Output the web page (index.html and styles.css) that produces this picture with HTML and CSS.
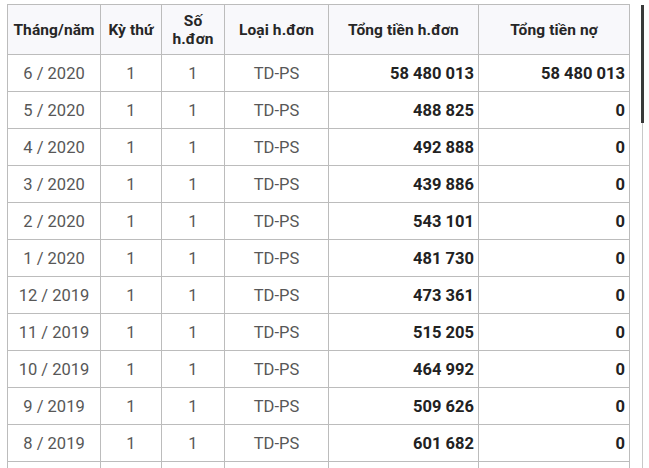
FILE: index.html
```html
<!DOCTYPE html>
<html>
<head>
<meta charset="utf-8">
<link rel="stylesheet" href="styles.css">
</head>
<body>
<div class="page">
  <table class="bills">
    <colgroup>
      <col class="c1"><col class="c2"><col class="c3"><col class="c4"><col class="c5"><col class="c6">
    </colgroup>
    <thead>
      <tr>
        <th>Tháng/năm</th>
        <th>Kỳ thứ</th>
        <th>Số<br>h.đơn</th>
        <th>Loại h.đơn</th>
        <th>Tổng tiền h.đơn</th>
        <th>Tổng tiền nợ</th>
      </tr>
    </thead>
    <tbody>
      <tr><td>6 / 2020</td><td>1</td><td>1</td><td>TD-PS</td><td class="num">58 480 013</td><td class="num">58 480 013</td></tr>
      <tr><td>5 / 2020</td><td>1</td><td>1</td><td>TD-PS</td><td class="num">488 825</td><td class="num">0</td></tr>
      <tr><td>4 / 2020</td><td>1</td><td>1</td><td>TD-PS</td><td class="num">492 888</td><td class="num">0</td></tr>
      <tr><td>3 / 2020</td><td>1</td><td>1</td><td>TD-PS</td><td class="num">439 886</td><td class="num">0</td></tr>
      <tr><td>2 / 2020</td><td>1</td><td>1</td><td>TD-PS</td><td class="num">543 101</td><td class="num">0</td></tr>
      <tr><td>1 / 2020</td><td>1</td><td>1</td><td>TD-PS</td><td class="num">481 730</td><td class="num">0</td></tr>
      <tr><td>12 / 2019</td><td>1</td><td>1</td><td>TD-PS</td><td class="num">473 361</td><td class="num">0</td></tr>
      <tr><td>11 / 2019</td><td>1</td><td>1</td><td>TD-PS</td><td class="num">515 205</td><td class="num">0</td></tr>
      <tr><td>10 / 2019</td><td>1</td><td>1</td><td>TD-PS</td><td class="num">464 992</td><td class="num">0</td></tr>
      <tr><td>9 / 2019</td><td>1</td><td>1</td><td>TD-PS</td><td class="num">509 626</td><td class="num">0</td></tr>
      <tr><td>8 / 2019</td><td>1</td><td>1</td><td>TD-PS</td><td class="num">601 682</td><td class="num">0</td></tr>
      <tr class="peek"><td></td><td></td><td></td><td></td><td></td><td></td></tr>
    </tbody>
  </table>
  <div class="track"><div class="thumb"></div></div>
</div>
</body>
</html>
```

FILE: styles.css
```css
html, body {
  margin: 0;
  padding: 0;
  background: #ffffff;
  overflow: hidden;
}
body {
  font-family: Roboto, "Noto Sans", Arial, sans-serif;
}
.page {
  display: flex;
  align-items: flex-start;
  padding: 4px 0 0 7px;
  height: 464px;
  overflow: hidden;
}
.bills {
  border-collapse: collapse;
  table-layout: fixed;
  width: 622px;
}
.c1 { width: 93px; }
.c2 { width: 61px; }
.c3 { width: 63px; }
.c4 { width: 104px; }
.c5 { width: 150px; }
.c6 { width: 151px; }
.bills th, .bills td {
  border: 1px solid #bcbcbc;
  padding: 0 4px;
  overflow: hidden;
  white-space: nowrap;
}
.bills th {
  height: 49px;
  padding: 0 2px;
  background: #f8f8fb;
  color: #262626;
  font-size: 15.5px;
  font-weight: 700;
  line-height: 18px;
  text-align: center;
  letter-spacing: 0.1px;
}
.bills td {
  height: 36px;
  color: #575757;
  font-size: 16.5px;
  text-align: center;
}
.bills td.num {
  text-align: right;
  font-weight: 700;
  color: #222222;
  padding-right: 4px;
}
.track {
  margin-left: 12px;
  margin-top: 1px;
  width: 1px;
  height: 463px;
  background: #c8c8c8;
  position: relative;
}
.thumb {
  position: absolute;
  left: -1px;
  top: 0;
  width: 3px;
  height: 118px;
  background: #3a3a3a;
}
```
